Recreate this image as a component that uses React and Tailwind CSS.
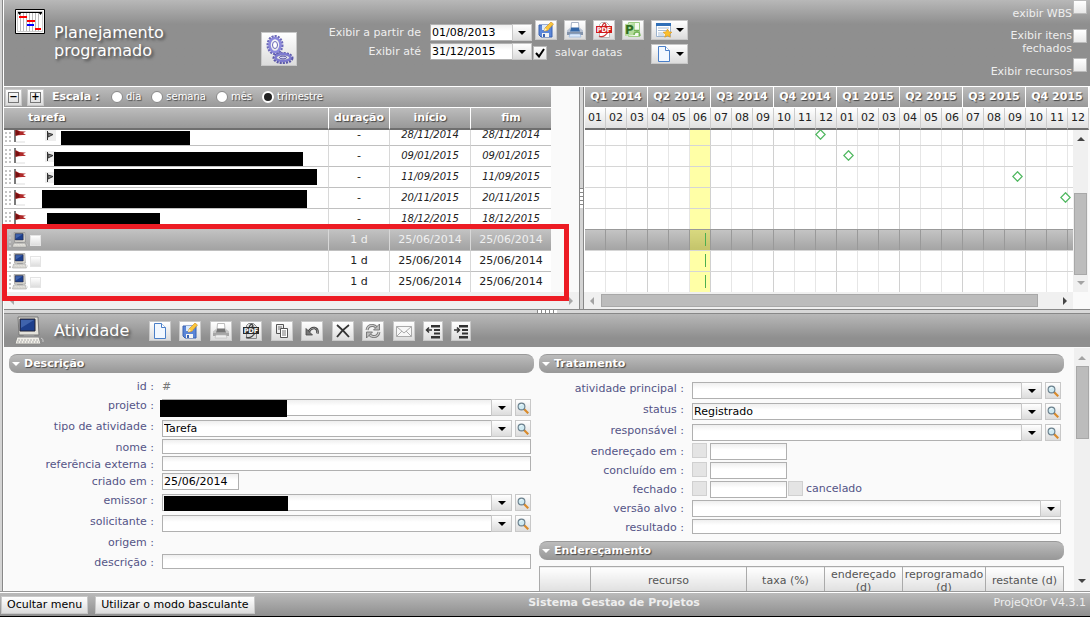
import { useState } from 'react';

const FLAG_ROWS = [
  { date: '28/11/2014', icon: true, mask: 'left-[57px] top-[6px] w-[129px] h-[17px]', at: 235 },
  { date: '09/01/2015', icon: true, mask: 'left-[50px] top-[6px] w-[249px] h-[14px]', at: 263 },
  { date: '11/09/2015', icon: true, mask: 'left-[50px] top-[2px] w-[263px] h-[16px]', at: 432 },
  { date: '20/11/2015', icon: false, mask: 'left-[38px] top-[2px] w-[265px] h-[19px]', at: 480 },
  { date: '18/12/2015', icon: false, mask: 'left-[43px] top-[4px] w-[113px] h-[19px]' },
];
const TASK_ROWS = [{ selected: true }, {}, {}].map(r => ({ ...r, task: true, date: '25/06/2014', at: 120 }));
const ROWS = [...FLAG_ROWS, ...TASK_ROWS];

const QUARTERS = ['Q1 2014', 'Q2 2014', 'Q3 2014', 'Q4 2014', 'Q1 2015', 'Q2 2015', 'Q3 2015', 'Q4 2015'];
const MONTHS = Array.from({ length: 24 }, (_, i) => String((i % 12) + 1).padStart(2, '0'));

const shadow = '[text-shadow:1px_1px_1px_#444]';
const barGrad = 'bg-linear-to-b from-[#bcbcbc] to-[#999]';
const btn = 'flex items-center justify-center border border-[#c8c8c8] bg-linear-to-b from-white to-[#dcdcdc]';
const field = 'border border-[#b0b0b0] bg-linear-to-b from-[#efefef] to-white to-40% text-[11px] text-black px-px outline-none rounded-none';

/* ---------- icons ---------- */

const Svg = ({ w = 16, h = 16, box, children }) => (
  <svg width={w} height={h} viewBox={box || '0 0 16 16'} fill="none" className="block shrink-0">{children}</svg>
);

const Page = () => (
  <Svg>
    <path d="M2.5.5h7l4 4v11h-11z" fill="#f2f8ff" stroke="#4a7fc8" />
    <path d="M9.5.5v4h4" fill="#fff" stroke="#4a7fc8" />
  </Svg>
);

const Save = () => (
  <Svg>
    <path d="M1 3h13v12H3l-2-2z" fill="#5b86d8" stroke="#3a62b0" />
    <path d="M4 3h7v5H4z" fill="#dcebfb" />
    <path d="M4 11h7v4H4z" fill="#f4f4f4" />
    <path d="M5 12h2v3H5z" fill="#3a62b0" />
    <path d="M6 9l1-3 6-6 2.500 2-6 6.500z" fill="#fbc63c" stroke="#c98a1e" strokeWidth=".6" />
    <path d="M6 9l1-3 2 2z" fill="#fff0c8" />
  </Svg>
);

const Print = ({ grey }) => (
  <Svg>
    <path d="M4.500.5h7l.5 6H4z" fill="#fff" stroke={grey ? '#bbb' : '#a9b4c6'} />
    <path d="M0 8.500L3 6v3h10V6l3 2.500V13H0z" fill={grey ? '#c4c4c4' : '#b9c3d3'} />
    <path d="M4 5.500h8l1 4H3z" fill={grey ? '#777' : '#3568a8'} />
    <path d="M0 10h16v3H0z" fill={grey ? '#a6a6a6' : '#8494ab'} />
    <path d="M3 12h10l1 3H2z" fill={grey ? '#eee' : '#dbe9fa'} stroke={grey ? '#bbb' : '#8fb0dc'} strokeWidth=".6" />
  </Svg>
);

const Pdf = ({ grey }) => (
  <Svg>
    <path d="M3.500 2.500l2-2h5l3 3v12h-10z" fill={grey ? '#ddd' : '#fff'} stroke={grey ? '#888' : '#bbb'} />
    <path d="M6 5c1-4 3-5 4-2l-2 2M3 14c4 2 7-1 9-4" stroke={grey ? '#444' : '#c33'} strokeWidth="1.300" />
    <path d="M0 4h16v7H0z" fill={grey ? '#2b2b2b' : '#d11a1a'} />
    <text x="8" y="10" fontSize="6.500" fontWeight="bold" fill="#fff" textAnchor="middle">PDF</text>
  </Svg>
);

const Project = () => (
  <Svg>
    <path d="M3.500.5h11v14h-11z" fill="#f4faef" stroke="#9fce86" />
    <path d="M0 2l10-1v12l-10 1z" fill="#b5dc9c" />
    <text x="0" y="12" fontSize="12" fontWeight="bold" fill="#2f6e22">P</text>
    <path d="M9 8.500h5M9 13q0-3 3-3t3 4M13.500 12.500l1.500 1.500" stroke="#74b457" strokeWidth="1.400" />
  </Svg>
);

const Calendar = () => (
  <Svg>
    <path d="M.5 1.500h14v13H.5z" fill="#fff" stroke="#9bb3cf" />
    <path d="M0 1h15v3H0z" fill="#2f6fb8" />
    <path d="M2 6h11M2 8.500h11M2 11h6M2 13h6" stroke="#a9bdd4" />
    <path d="M11.500 7l1.400 2.800 3 .4-2.200 2 .6 3-2.800-1.400-2.700 1.400.5-3-2.100-2 2.900-.4z" fill="#fbc02d" stroke="#d8921a" strokeWidth=".6" />
  </Svg>
);

const Copy = () => (
  <Svg>
    <path d="M2.500 1.500h7v9h-7z" fill="#eee" stroke="#555" />
    <path d="M6.500 5.500h7v9h-7z" fill="#fff" stroke="#555" />
    <path d="M4 4h4M4 6h2M8 8h4M8 10h4M8 12h4" stroke="#777" />
  </Svg>
);

const Undo = () => (
  <Svg>
    <path d="M4.500 9Q7 4.500 10.500 5t3 5.500" stroke="#444" strokeWidth="2.600" />
    <path d="M4.500 9Q7 4.500 10.500 5t3 5.500" stroke="#999" strokeWidth="1" />
    <path d="M2 5.500v6.500h6.500z" fill="#777" stroke="#444" strokeWidth=".8" />
  </Svg>
);

const Cross = () => (
  <Svg>
    <path d="M2 2q6 5 12 12M14 2Q7 7 2 14" stroke="#333" strokeWidth="1.800" />
  </Svg>
);

const Refresh = () => (
  <Svg>
    <path d="M2 7Q3 2 8 2.500q2 .2 3.500 2M14 9q-1 5-6 4.500-2-.2-3.500-2" stroke="#777" strokeWidth="3" />
    <path d="M2 7Q3 2 8 2.500q2 .2 3.500 2M14 9q-1 5-6 4.500-2-.2-3.500-2" stroke="#ccc" strokeWidth="1.200" />
    <path d="M14.500 1v6h-6zM1.500 15V9h6z" fill="#bbb" stroke="#666" strokeWidth=".8" />
  </Svg>
);

const Mail = () => (
  <Svg>
    <path d="M.5 3.500h15v10H.5z" fill="#f7f7f7" stroke="#aaa" />
    <path d="M.5 3.500L8 10l7.500-6.500M.5 13.500L6 8M15.500 13.500L10 8" stroke="#aaa" />
  </Svg>
);

const Indent = ({ out }) => (
  <Svg>
    <path d="M6 2h9v2.500H6zM9 6h6v2H9zM9 9.500h6v2H9zM6 13h9v2.500H6z" fill="#333" />
    <path d={out ? 'M7 7H2M4 4.500L1.500 7 4 9.500' : 'M1 7h5M4 4.500L6.500 7 4 9.500'} stroke="#333" strokeWidth="1.500" />
  </Svg>
);

const Lens = () => (
  <Svg w={12} h={12}>
    <path d="M9 9l6 6" stroke="#d98a2b" strokeWidth="3" />
    <circle cx="6" cy="6" r="4.500" fill="#cfeaf2" stroke="#6a7f8c" strokeWidth="1.500" />
    <path d="M4 5q1-2 3-1.500" stroke="#fff" />
  </Svg>
);

const Computer = ({ size = 16 }) => (
  <Svg w={size} h={size} box="0 0 30 30">
    <path d="M4 1h20l1 18H5z" fill="#e4e2da" stroke="#777" />
    <path d="M6 3h15v12H6z" fill="#1d3f8c" stroke="#223" />
    <path d="M7 4h13L7 12z" fill="#3f63ac" />
    <path d="M10 19h10l1 2H9z" fill="#999" />
    <path d="M3 21h22l2 7H1z" fill="#f1efe8" stroke="#888" />
    <path d="M4 24h20M3 26h22" stroke="#aaa" strokeDasharray="2 1" />
    <path d="M27 22q3 1 2 4" stroke="#ccc" />
  </Svg>
);

const Flag = () => (
  <Svg w={14} h={16} box="0 0 14 16">
    <path d="M1 0v15" stroke="#222" strokeWidth="1.200" />
    <path d="M1.500 2q4 3 10.500 2.500l-3 1.500 3 2q-7-.5-10.500 1z" fill="#b02a2a" />
    <path d="M1.500 2.500q2 1.500 4 2v3l-4 1z" fill="#7a1010" />
    <path d="M2 15h9" stroke="#ddd" />
  </Svg>
);

const Gears = () => (
  <Svg w={30} h={30} box="0 0 30 30">
    <ellipse cx="11" cy="11" rx="7" ry="8.500" stroke="#6a67b8" strokeWidth="3" strokeDasharray="2 1" />
    <ellipse cx="11" cy="11" rx="5.500" ry="7" stroke="#8b88dc" strokeWidth="2.500" />
    <ellipse cx="11" cy="11" rx="2.500" ry="3.500" fill="#fff" stroke="#6a67b8" />
    <ellipse cx="19" cy="24" rx="9" ry="4.500" stroke="#5b58a8" strokeWidth="3" strokeDasharray="2 1" />
    <ellipse cx="19" cy="23.500" rx="7.500" ry="3.500" stroke="#7d7ad0" strokeWidth="2.500" />
    <ellipse cx="19" cy="23.500" rx="3.500" ry="1.500" fill="#d5d4f2" stroke="#4c4996" />
  </Svg>
);

const Gantt = () => (
  <Svg w={30} h={25} box="0 0 30 25">
    <path d="M.5.5h29v24H.5z" fill="#fff" stroke="#000" />
    <path d="M2.500 2.500h25v20h-25z" stroke="#ccc" />
    <path d="M5.500 4v18M8.500 4v18M11.500 4v18M14.500 4v18M17.500 4v18M20.500 4v18M23.500 4v18" stroke="#bbb" />
    <path d="M3 3h24v1l-1.500 2L24 4H6L4.500 6 3 4z" fill="#000" />
    <path d="M4 7h8v2H4zM12 11h8v2h-8zM20 19h6v2h-6z" fill="#f00" />
    <path d="M12 15h7v2h-7z" fill="#00f" />
  </Svg>
);

const Caret = ({ dir = 'down', color = '#000' }) => {
  const d = { down: 'M0 2h8L4 6z', up: 'M0 6h8L4 2z', left: 'M6 0v8L2 4z', right: 'M2 0v8l4-4z' }[dir];
  return <Svg w={8} h={8} box="0 0 8 8"><path d={d} fill={color} /></Svg>;
};

const Dots = () => (
  <Svg w={6} h={14} box="0 0 6 14">
    <path d="M0 1h2M4 1h2M0 5h2M4 5h2M0 9h2M4 9h2M0 13h2M4 13h2" stroke="#c4c4c4" strokeWidth="2" />
  </Svg>
);

/* ---------- form controls ---------- */

function IconButton({ label, className = 'w-[22px]', children }) {
  return <button type="button" aria-label={label} className={`${btn} h-5 shrink-0 ${className}`}>{children}</button>;
}

function DateBox({ id, value }) {
  return (
    <div className="flex h-[17px] w-[102px]">
      <input id={id} defaultValue={value} className={`${field} min-w-0 flex-1 border-r-0`} />
      <button type="button" aria-label="Abrir calendário" className={`${btn} w-5 border-[#b0b0b0]`}><Caret /></button>
    </div>
  );
}

function Combo({ id, value = '', lens, mask }) {
  return (
    <div className="flex flex-1 gap-[3px]">
      <div className="relative flex-1">
        <select id={id} defaultValue={value} className={`${field} block h-[17px] w-full appearance-none`}>
          <option>{value}</option>
        </select>
        <span className={`${btn} pointer-events-none absolute top-0 right-0 h-[17px] w-[21px] border-[#b0b0b0]`}><Caret /></span>
        {mask && <span className={`absolute bg-black ${mask}`} />}
      </div>
      {lens && (
        <button type="button" aria-label="Procurar" className={`${btn} h-[17px] w-4 border-[#b0b0b0]`}><Lens /></button>
      )}
    </div>
  );
}

function Row({ id, label, h = 'h-[21px]', pad = '', children }) {
  return (
    <div className={`flex items-start pr-[3px] ${h}`}>
      <label htmlFor={id} className="w-[153px] shrink-0 pr-2 text-right leading-[17px] whitespace-nowrap text-[#545486]">{label} :</label>
      <div className={`flex min-w-0 flex-1 ${pad}`}>{children}</div>
    </div>
  );
}

const TextBox = ({ id }) => <input id={id} className={`${field} h-[15px] w-full`} />;

const Tick = ({ id, label }) => (
  <input id={id} type="checkbox" aria-label={label} className="size-[15px] shrink-0 appearance-none border border-[#d0d0d0] bg-[#e4e4e4]" />
);

function DoneRow({ id, label, children }) {
  return (
    <Row id={id} label={label} h="h-[19px]">
      <Tick id={`${id}-ok`} label={label} />
      <input id={id} className={`${field} ml-[3px] h-[17px] w-[77px]`} />
      {children}
    </Row>
  );
}

function Section({ title }) {
  return (
    <h2 className={`flex h-[19px] items-center gap-1 rounded-lg border-y border-[#999] pl-[3px] text-[11px] font-bold text-white ${barGrad} ${shadow}`}>
      <Caret color="#fff" />{title}
    </h2>
  );
}

/* ---------- header ---------- */

function Header() {
  return (
    <header className="flex h-[87px] items-start border-b border-white bg-linear-to-b from-[#b8b8b8] to-[#8f8f8f] to-[24px] pl-[11px] text-[#eee]">
      <div className="pt-[9px]"><Gantt /></div>
      <h1 className="w-[216px] pt-[24px] pl-[9px] text-base leading-[18px] text-white [text-shadow:2px_2px_3px_#444]">
        Planejamento<br />programado
      </h1>
      <button type="button" aria-label="Calcular plano" className={`${btn} mt-8 h-[34px] w-9`}><Gears /></button>

      <div className="mt-6 ml-5 grid grid-cols-[104px_auto] gap-x-[9px] gap-y-[2px] leading-[17px]">
        <label htmlFor="start" className="text-right whitespace-nowrap">Exibir a partir de</label>
        <DateBox id="start" value="01/08/2013" />
        <label htmlFor="end" className="text-right">Exibir até</label>
        <DateBox id="end" value="31/12/2015" />
      </div>

      <div className="mt-5 ml-[3px]">
        <div className="flex gap-[7px]">
          <IconButton label="Salvar"><Save /></IconButton>
          <IconButton label="Imprimir"><Print /></IconButton>
          <IconButton label="PDF"><Pdf /></IconButton>
          <IconButton label="Exportar"><Project /></IconButton>
        </div>
        <label className="-ml-[2px] mt-[6px] flex items-center gap-2">
          <span className="relative flex">
            <input type="checkbox" defaultChecked className="peer size-[14px] appearance-none border border-[#bbb] bg-linear-to-b from-white to-[#e4e4e4]" />
            <svg width="10" height="10" viewBox="0 0 10 10" className="pointer-events-none absolute top-[2px] left-[2px] hidden peer-checked:block">
              <path d="M1 5l3 3.500L9 1" fill="none" stroke="#000" strokeWidth="2" />
            </svg>
          </span>
          salvar datas
        </label>
      </div>
      <div className="mt-5 ml-[7px] flex flex-col gap-1">
        <IconButton label="Visão" className="w-[37px] gap-1"><Calendar /><Caret /></IconButton>
        <IconButton label="Novo" className="w-[37px] gap-1"><Page /><Caret /></IconButton>
      </div>

      <div className="mr-[3px] ml-auto flex flex-col gap-[15px] leading-[13px]">
        {['exibir WBS', 'Exibir itens fechados', 'Exibir recursos'].map((t, i) => (
          <label key={t} className="flex h-[14px] items-start justify-end gap-px text-right">
            <span className={i === 1 ? 'w-[70px]' : 'pt-[7px]'}>{t}</span>
            <input type="checkbox" className="size-[14px] shrink-0 appearance-none border border-[#bbb] bg-linear-to-b from-white to-[#e8e8e8]" />
          </label>
        ))}
      </div>
    </header>
  );
}

/* ---------- gantt ---------- */

const Cols = () => (
  <colgroup>
    <col className="w-[325px]" /><col className="w-[61px]" /><col className="w-[81px]" /><col className="w-[80px]" />
  </colgroup>
);

function ScaleBar() {
  const [scale, setScale] = useState('trimestre');
  return (
    <div className={`flex h-[21px] w-[547px] items-center border-b border-white pl-px ${barGrad} ${shadow} text-white`}>
      {['−', '+'].map(s => (
        <button key={s} type="button" className={`${btn} mr-[5px] size-[17px] text-black [text-shadow:none]`}>
          <span className="flex size-[11px] items-center justify-center border border-[#777] text-[10px] font-bold">{s}</span>
        </button>
      ))}
      <span className="w-[62px] pl-[3px] font-bold">Escala :</span>
      {['dia', 'semana', 'mês', 'trimestre'].map(s => (
        <label key={s} className="mr-[10px] flex items-center gap-[3px] text-[10px]">
          <input
            type="radio" name="scale" checked={scale === s} onChange={() => setScale(s)}
            className="size-3 appearance-none rounded-full border border-[#888] bg-white checked:border-2 checked:border-white checked:bg-[#222]"
          />
          {s}
        </label>
      ))}
    </div>
  );
}

function TaskList() {
  return (
    <div className="w-[575px] shrink-0 bg-[#fafafa]">
      <ScaleBar />
      <table className="w-[547px] table-fixed border-separate border-spacing-0">
        <Cols />
        <thead>
          <tr className={`text-white ${shadow}`}>
            {['tarefa', 'duração', 'início', 'fim'].map((t, i) => (
              <th key={t} className={`h-[22px] border-b-2 border-[#6f6f6f] p-0 ${barGrad} ${i ? 'text-center' : 'pl-6 text-left'} ${i < 3 ? 'border-r border-r-white' : ''}`}>{t}</th>
            ))}
          </tr>
        </thead>
      </table>
      <div className="relative">
        <div className="flex h-[162px] flex-col justify-end overflow-hidden">
          <table className="w-[547px] table-fixed border-separate border-spacing-0">
            <Cols />
            <tbody>
              {ROWS.map((r, i) => {
                const cell = `h-[21px] border-t border-[#c0c0c0] p-0 text-center ${r.selected ? 'bg-linear-to-b from-[#c2c2c2] to-[#a2a2a2] text-[#f0f0f0]' : 'bg-white'}`;
                const date = r.task ? '' : 'text-[10px] italic';
                return (
                  <tr key={i}>
                    <td className={`${cell} relative border-r border-r-[#d8d8d8]`}>
                      <div className="flex h-5 items-center pl-px">
                        <Dots />
                        <span className={r.task ? 'ml-px' : 'ml-[3px]'}>{r.task ? <Computer /> : <Flag />}</span>
                        {r.task && <span className="ml-[2px] size-[11px] border border-[#e4e4e4] bg-linear-to-b from-white to-[#ddd]" />}
                        {r.icon && (
                          <span className="ml-[17px] flex size-[11px] items-center justify-center bg-[#eee]">
                            <Svg w={9} h={9} box="0 0 9 9"><path d="M1.500 0v9M2 2l5 1.500L2 6z" fill="#888" stroke="#333" /></Svg>
                          </span>
                        )}
                      </div>
                      {r.mask && <span className={`absolute bg-black ${r.mask}`} />}
                    </td>
                    <td className={`${cell} border-r border-r-[#d8d8d8]`}>{r.task ? '1 d' : '-'}</td>
                    <td className={`${cell} border-r border-r-[#d8d8d8] ${date}`}>{r.date}</td>
                    <td className={`${cell} ${date}`}>{r.date}</td>
                  </tr>
                );
              })}
            </tbody>
          </table>
        </div>
        <div className="flex h-[17px] items-center justify-between bg-[#f0f0f0] pr-1 pl-1">
          <Caret dir="left" color="#a8a8a8" /><Caret dir="right" color="#a8a8a8" />
        </div>
        <div className="pointer-events-none absolute top-[94px] right-[10px] -left-[2px] h-[77px] border-5 border-[#ed1c24]" />
      </div>
    </div>
  );
}

const monthLine = i => (i % 3 === 2 ? 'border-[#d0d0d0]' : 'border-[#e6e6e6]');

function Timeline() {
  return (
    <div className="min-w-0 flex-1 overflow-hidden bg-[#fafafa]">
      <table className="ml-px w-[504px] table-fixed border-separate border-spacing-0">
        <thead>
          <tr className={`text-white ${shadow}`}>
            {QUARTERS.map(q => (
              <th key={q} colSpan={3} className={`h-[21px] border-r border-b border-white p-0 ${barGrad}`}>{q}</th>
            ))}
          </tr>
          <tr>
            {MONTHS.map((m, i) => (
              <th key={i} className="h-[22px] border-r border-b-2 border-[#ccc] border-b-[#6f6f6f] bg-linear-to-b from-white to-[#e0e0e0] p-0 font-normal">{m}</th>
            ))}
          </tr>
        </thead>
      </table>
      <div className="flex pr-[2px]">
        <div className="min-w-0 flex-1">
          <div className="flex h-[162px] flex-col justify-end overflow-hidden bg-white pl-px">
            {ROWS.map((r, i) => (
              <div key={i} className={`relative flex h-[21px] shrink-0 border-t ${r.selected ? 'border-[#999] bg-linear-to-b from-[#c4c4c4] to-[#a4a4a4]' : 'border-[#d6d6d6]'}`}>
                {MONTHS.map((m, j) => (
                  <span key={j} className={`w-[21px] shrink-0 border-r ${r.selected ? 'border-[#999]' : monthLine(j)} ${j === 5 ? 'bg-[#ffff00]/35' : ''}`} />
                ))}
                {r.task && <span className="absolute top-[3px] h-[13px] w-px bg-[#4caf50]" style={{ left: r.at }} />}
                {!r.task && r.at && (
                  <svg width="11" height="11" viewBox="0 0 11 11" className="absolute top-[4px]" style={{ left: r.at - 5 }}>
                    <path d="M5.500.8l4.700 4.700-4.700 4.700L.8 5.500z" fill="#fff" stroke="#50b860" strokeWidth="1.300" />
                  </svg>
                )}
              </div>
            ))}
          </div>
          <div className="flex h-[17px] items-center gap-[5px] bg-[#f0f0f0] px-1">
            <Caret dir="left" color="#a3a3a3" />
            <div className="mr-[18px] h-[13px] flex-1 border border-[#a8a8a8] bg-[#bcbcbc]" />
            <Caret dir="right" color="#444" />
          </div>
        </div>
        <div className="flex h-[162px] w-[15px] flex-col items-center bg-[#f0f0f0] pt-[5px] pb-[5px]">
          <Caret dir="up" color="#444" />
          <div className="mt-auto mb-[4px] h-[82px] w-[13px] border border-[#a8a8a8] bg-[#bcbcbc]" />
          <Caret color="#a3a3a3" />
        </div>
      </div>
    </div>
  );
}

/* ---------- activity details ---------- */

function Toolbar() {
  return (
    <div className="flex h-[33px] shrink-0 items-center bg-linear-to-b from-[#b8b8b8] to-[#8f8f8f] to-[24px] pl-[10px]">
      <Computer size={30} />
      <h2 className="w-[105px] pl-[10px] text-base text-white [text-shadow:2px_2px_3px_#444]">Atividade</h2>
      <div className="flex gap-[9px]">
        <div className="flex gap-2">
          <IconButton label="Novo"><Page /></IconButton>
          <IconButton label="Salvar"><Save /></IconButton>
        </div>
        <div className="flex gap-2">
          <IconButton label="Imprimir"><Print grey /></IconButton>
          <IconButton label="PDF"><Pdf grey /></IconButton>
        </div>
        <div className="flex gap-2">
          <IconButton label="Copiar"><Copy /></IconButton>
          <IconButton label="Desfazer"><Undo /></IconButton>
        </div>
        <div className="flex gap-2">
          <IconButton label="Apagar"><Cross /></IconButton>
          <IconButton label="Atualizar"><Refresh /></IconButton>
        </div>
        <div className="flex gap-2">
          <IconButton label="E-mail"><Mail /></IconButton>
          <IconButton label="Recuar" className="w-5"><Indent out /></IconButton>
          <IconButton label="Avançar" className="w-5"><Indent /></IconButton>
        </div>
      </div>
    </div>
  );
}

function Description() {
  return (
    <section>
      <Section title="Descrição" />
      <div className="pt-[5px]">
        <Row id="id" label="id" h="h-[19px]" pad="items-center leading-[17px] text-[#777]"><output id="id">#</output></Row>
        <Row id="project" label="projeto" pad="pt-[2px]"><Combo id="project" lens mask="-left-[2px] top-[1px] h-[17px] w-[127px]" /></Row>
        <Row id="type" label="tipo de atividade" pad="pt-[2px]"><Combo id="type" value="Tarefa" lens /></Row>
        <Row id="name" label="nome" h="h-[17px]"><TextBox id="name" /></Row>
        <Row id="ref" label="referência externa" h="h-[17px]"><TextBox id="ref" /></Row>
        <Row id="created" label="criado em" h="h-[19px]">
          <input id="created" defaultValue="25/06/2014" className={`${field} h-[17px] w-[77px]`} />
        </Row>
        <Row id="issuer" label="emissor" pad="pt-[2px]"><Combo id="issuer" lens mask="left-[2px] top-[2px] h-[15px] w-[124px]" /></Row>
        <Row id="requestor" label="solicitante" pad="pt-[2px]"><Combo id="requestor" lens /></Row>
        <Row label="origem" h="h-5" />
        <Row id="desc" label="descrição" h="h-[17px]"><TextBox id="desc" /></Row>
      </div>
    </section>
  );
}

function Treatment() {
  return (
    <section>
      <Section title="Tratamento" />
      <div className="pt-[7px] pb-[5px]">
        <Row id="parent" label="atividade principal" pad="pt-[2px]"><Combo id="parent" lens /></Row>
        <Row id="status" label="status" pad="pt-[2px]"><Combo id="status" value="Registrado" lens /></Row>
        <Row id="resp" label="responsável" pad="pt-[2px]"><Combo id="resp" lens /></Row>
        <DoneRow id="handled" label="endereçado em" />
        <DoneRow id="done" label="concluído em" />
        <DoneRow id="closed" label="fechado">
          <label className="ml-px flex gap-[3px] leading-[15px] text-[#545486]"><Tick id="cancelled" label="cancelado" />cancelado</label>
        </DoneRow>
        <Row id="target" label="versão alvo" h="h-[19px]"><Combo id="target" /></Row>
        <Row id="result" label="resultado" h="h-[17px]"><TextBox id="result" /></Row>
      </div>
      <Section title="Endereçamento" />
      <table className="mt-[6px] w-full table-fixed border-collapse text-[#555]">
        <colgroup>
          <col className="w-[51px]" /><col /><col className="w-[78px]" /><col className="w-[78px]" /><col className="w-[83px]" /><col className="w-[78px]" />
        </colgroup>
        <thead>
          <tr>
            {['', 'recurso', 'taxa (%)', 'endereçado (d)', 'reprogramado (d)', 'restante (d)'].map(t => (
              <th key={t} className="h-7 border border-[#aaa] bg-linear-to-b from-white to-[#dcdcdc] p-0 leading-[13px] font-normal">{t}</th>
            ))}
          </tr>
        </thead>
      </table>
    </section>
  );
}

export default function App() {
  return (
    <div className="flex h-screen min-w-[1000px] flex-col overflow-hidden bg-[#fafafa] font-['DejaVu_Sans',Verdana,sans-serif] text-[11px] leading-[14px] text-[#222]">
      <div className="flex min-h-0 flex-1">
        <div className="flex w-1 shrink-0 items-center border-r border-white bg-[#d4d4d4]">
          <div className="ml-auto h-full w-px bg-[#888]" />
        </div>
        <div className="flex min-w-0 flex-1 flex-col">
          <Header />
          <div className="flex">
            <TaskList />
            <div className="flex w-[5px] shrink-0 items-center border-x border-[#888] bg-[#d4d4d4]">
              <div className="h-5 w-full bg-[repeating-linear-gradient(#888_0_1px,#fff_1px_4px)]" />
            </div>
            <Timeline />
          </div>
          <div className="flex h-[5px] shrink-0 justify-center border-y border-[#888] bg-[#d8d8d8]">
            <div className="h-full w-5 bg-[repeating-linear-gradient(90deg,#888_0_1px,#fff_1px_4px)]" />
          </div>
          <Toolbar />
          <div className="flex min-h-0 flex-1">
            <main className="grid min-w-0 flex-1 grid-cols-2 gap-[5px] overflow-hidden pt-[7px] pr-[10px] pl-[5px]">
              <Description />
              <Treatment />
            </main>
            <div className="mt-px flex w-4 shrink-0 flex-col items-center bg-[#f0f0f0] py-[6px]">
              <Caret dir="up" color="#a3a3a3" />
              <div className="mt-1 mb-auto h-[73px] w-[13px] border border-[#a8a8a8] bg-[#bcbcbc]" />
              <Caret color="#444" />
            </div>
          </div>
        </div>
      </div>
      <footer className="grid h-[26px] shrink-0 grid-cols-3 border-t border-b border-t-[#999] border-b-black bg-linear-to-b from-[#bcbcbc] to-[#8f8f8f] pt-[4px] text-[#eee] shadow-[inset_0_1px_0_#fff]">
        <div className="flex gap-[7px] pl-px text-black">
          <button type="button" className={`${btn} h-[18px] px-[5px] whitespace-nowrap`}>Ocultar menu</button>
          <button type="button" className={`${btn} h-[18px] px-[5px] whitespace-nowrap`}>Utilizar o modo basculante</button>
        </div>
        <strong className="pl-[138px] text-center whitespace-nowrap">Sistema Gestao de Projetos</strong>
        <a href="#version" className="pr-1 text-right">ProjeQtOr V4.3.1</a>
      </footer>
    </div>
  );
}
